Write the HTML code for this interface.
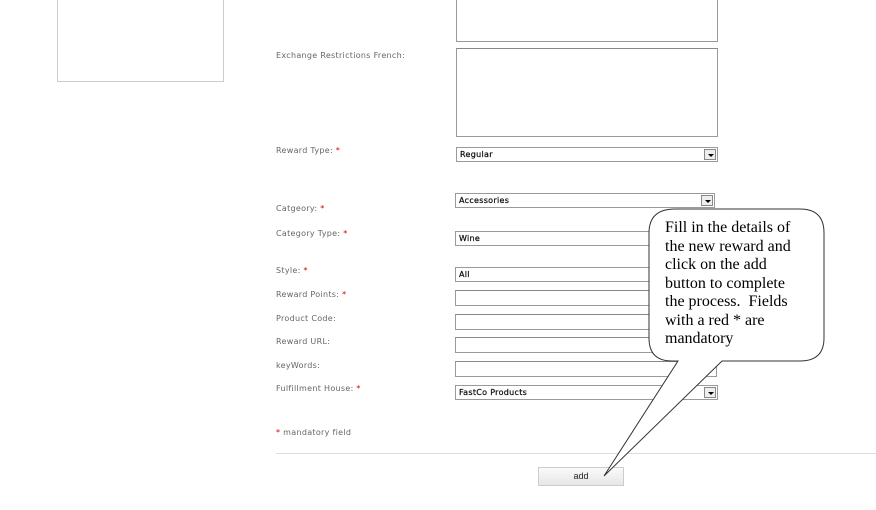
<!DOCTYPE html>
<html><head><style>
body{margin:0;width:876px;height:510px;background:#fff;position:relative;overflow:hidden;font-family:"DejaVu Sans","Liberation Sans",sans-serif;}
.a{position:absolute;}
.l{position:absolute;left:276px;font-size:8px;color:#666;letter-spacing:0.3px;}
.r{color:#c00;}
.box{position:absolute;border:1px solid #9a9a9a;border-top-color:#888;background:#fff;box-sizing:border-box;}
.sel{position:absolute;border:1px solid #9a9a9a;background:#fff;box-sizing:border-box;height:15px;font-size:8px;color:#111;padding:2px 0 0 3px;letter-spacing:0.3px;-webkit-text-stroke:0.25px #111}
.dd{position:absolute;right:1px;top:1px;width:12px;height:11px;background:#eee;border:1px solid #888;box-sizing:border-box}
.dd:after{content:"";position:absolute;left:3px;top:4px;border-left:3px solid transparent;border-right:3px solid transparent;border-top:3px solid #000}
</style></head><body>
<div class="box" style="left:57px;top:-2px;width:167px;height:84px;border-color:#ccc"></div>
<div class="box" style="left:456px;top:-2px;width:262px;height:44px"></div>
<div class="l" style="top:51px">Exchange Restrictions French:</div>
<div class="box" style="left:456px;top:48px;width:262px;height:89px"></div>
<div class="l" style="top:146px">Reward Type: <span class="r">*</span></div>
<div class="sel" style="left:456px;top:147px;width:262px">Regular<div class="dd"></div></div>
<div class="sel" style="left:455px;top:193px;width:260px">Accessories<div class="dd"></div></div>
<div class="l" style="top:204px">Catgeory: <span class="r">*</span></div>
<div class="l" style="top:229px">Category Type: <span class="r">*</span></div>
<div class="sel" style="left:455px;top:231px;width:262px">Wine</div>
<div class="l" style="top:266px">Style: <span class="r">*</span></div>
<div class="sel" style="left:455px;top:267px;width:262px">All</div>
<div class="l" style="top:290px">Reward Points: <span class="r">*</span></div>
<div class="box" style="left:455px;top:290px;width:262px;height:16px"></div>
<div class="l" style="top:314px">Product Code:</div>
<div class="box" style="left:455px;top:314px;width:262px;height:16px"></div>
<div class="l" style="top:337px">Reward URL:</div>
<div class="box" style="left:455px;top:337px;width:262px;height:16px"></div>
<div class="l" style="top:361px">keyWords:</div>
<div class="box" style="left:455px;top:361px;width:262px;height:16px"></div>
<div class="l" style="top:384px">Fulfillment House: <span class="r">*</span></div>
<div class="sel" style="left:455px;top:385px;width:263px">FastCo Products<div class="dd"></div></div>
<div class="l" style="top:428px"><span class="r">*</span> mandatory field</div>
<div class="a" style="left:276px;top:453px;width:600px;height:1px;background:#ddd"></div>
<div class="a" style="left:538px;top:467px;width:86px;height:19px;box-sizing:border-box;border:1px solid #ccc;background:linear-gradient(#fafafa,#e6e6e6);font-size:9px;text-align:center;line-height:17px;color:#222;font-family:'Liberation Sans',sans-serif">add</div>
<svg class="a" style="left:0;top:0" width="876" height="510">
<path d="M675,209 H800 Q824,209 824,233 V338 Q824,361 800,361 H722 L604,476 L678,361 H672 Q649,361 649,338 V233 Q649,209 675,209 Z" fill="#fff" stroke="#333" stroke-width="1"/>
</svg>
<div class="a" style="left:665px;top:219px;white-space:nowrap;font-family:'Liberation Serif',serif;font-size:16px;line-height:18.5px;letter-spacing:0;color:#000">Fill in the details of<br>the new reward and<br>click on the add<br>button to complete<br>the process.&nbsp; Fields<br>with a red * are<br>mandatory</div>
</body></html>
